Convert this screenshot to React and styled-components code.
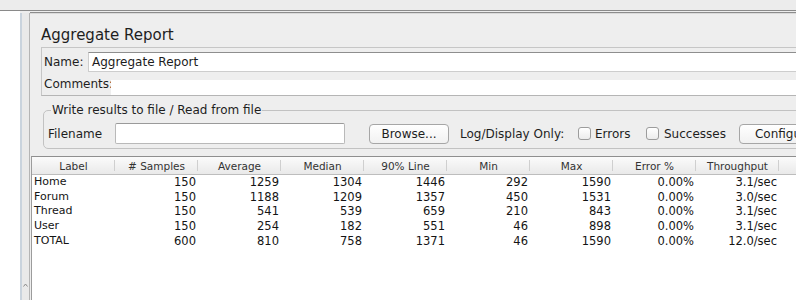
import styled, { createGlobalStyle } from 'styled-components';

const GlobalStyle = createGlobalStyle`
  html, body {
    margin: 0;
    padding: 0;
    background: #ededed;
  }
  body {
    font-family: "DejaVu Sans", "Liberation Sans", sans-serif;
    color: #1c1c1c;
  }
`;

const rows = [
  ['Home', '150', '1259', '1304', '1446', '292', '1590', '0.00%', '3.1/sec'],
  ['Forum', '150', '1188', '1209', '1357', '450', '1531', '0.00%', '3.0/sec'],
  ['Thread', '150', '541', '539', '659', '210', '843', '0.00%', '3.1/sec'],
  ['User', '150', '254', '182', '551', '46', '898', '0.00%', '3.1/sec'],
  ['TOTAL', '600', '810', '758', '1371', '46', '1590', '0.00%', '12.0/sec'],
];

const columns = ['Label', '# Samples', 'Average', 'Median', '90% Line', 'Min', 'Max', 'Error %', 'Throughput', ''];

const Window = styled.div`
  width: 796px;
  height: 300px;
  overflow: hidden;
  display: flex;
  flex-direction: column;
`;

const TopStrip = styled.div`
  height: 10px;
  flex-shrink: 0;
  background: #ececec;
  border-bottom: 1px solid #8a8a8a;
`;

const Workspace = styled.div`
  flex: 1;
  display: flex;
  min-height: 0;
`;

const Tree = styled.div`
  width: 20px;
  flex-shrink: 0;
  background: #fff;
`;

const Splitter = styled.div`
  width: 7px;
  flex-shrink: 0;
  margin-top: 2px;
  background: #e9e9e9;
  border-left: 2px solid #c9d3dd;
  border-right: 1px solid #b4b4b4;
  display: flex;
  flex-direction: column;
  justify-content: flex-end;
  align-items: center;
  padding-bottom: 13px;
`;

const Main = styled.div`
  flex: 1;
  min-width: 0;
  margin-top: 1px;
  border-top: 1px solid #8c8c8c;
  box-shadow: inset 0 1px 0 #dadada;
  background: #eeeeee;
  overflow: hidden;
  display: flex;
  flex-direction: column;
`;

const Title = styled.h1`
  margin: 13px 0 0 11px;
  font-size: 15px;
  line-height: 18px;
  font-weight: normal;
  color: #1e1e1e;
`;

const NameBox = styled.div`
  margin: 3px -10px 0 11px;
  border: 1px solid #c6c6c6;
  border-bottom-color: #b5b5b5;
`;

const FieldRow = styled.div`
  display: flex;
  align-items: ${(p) => (p.$bottom ? 'flex-end' : 'center')};
  height: ${(p) => p.$height}px;
  padding-top: ${(p) => p.$padTop || 0}px;
  box-sizing: border-box;
`;

const Label = styled.span`
  font-size: 12px;
  line-height: 14px;
  padding-left: ${(p) => p.$pad || 0}px;
  margin-left: ${(p) => p.$ml || 0}px;
  width: ${(p) => (p.$w ? `${p.$w}px` : 'auto')};
  box-sizing: border-box;
  flex-shrink: 0;
  white-space: nowrap;
  align-self: center;
  color: #1e1e1e;
`;

const NameInput = styled.div`
  flex: 1;
  height: 20px;
  box-sizing: border-box;
  background: #fff;
  border: 1px solid #cdcdcd;
  border-top: 1px solid #8e8e8e;
  font-size: 12px;
  line-height: 18px;
  padding-left: 3px;
`;

const CommentField = styled.div`
  flex: 1;
  height: 15px;
  background: #fff;
`;

const Group = styled.fieldset`
  margin: 7px -20px 0 13px;
  padding: 6px 0 4px 3px;
  min-width: 0;
  border: 1px solid #c2c2c2;
  border-radius: 5px;
`;

const Legend = styled.legend`
  font-size: 12px;
  line-height: 14px;
  padding: 0 1px;
  margin-left: 4px;
  color: #1e1e1e;
`;

const ControlRow = styled.div`
  display: flex;
  align-items: center;
  height: 21px;
`;

const TextBox = styled.div`
  width: 230px;
  height: 21px;
  box-sizing: border-box;
  background: #fff;
  border: 1px solid #b9b9b9;
  border-top-color: #9a9a9a;
  border-radius: 2px;
  flex-shrink: 0;
`;

const Button = styled.div`
  width: ${(p) => p.$width}px;
  height: 20px;
  box-sizing: border-box;
  margin-left: ${(p) => p.$ml}px;
  border: 1px solid #a6a6a6;
  border-radius: 4px;
  background: linear-gradient(#ffffff, #f1f1f1);
  font-size: 12px;
  line-height: 18px;
  text-align: center;
  flex-shrink: 0;
  white-space: nowrap;
  color: #1e1e1e;
`;

const Check = styled.span`
  width: 13px;
  height: 13px;
  box-sizing: border-box;
  margin-left: ${(p) => p.$ml}px;
  border: 1px solid #9c9c9c;
  border-radius: 3px;
  background: linear-gradient(#ffffff, #ececec);
  flex-shrink: 0;
`;

const Table = styled.div`
  flex: 1;
  margin: 7px 0 0 1px;
  border-left: 1px solid #9c9c9c;
  border-top: 1px solid #8f8f8f;
  background: #fff;
`;

const Grid = styled.div`
  display: grid;
  grid-template-columns: repeat(10, 83px);
`;

const HeadRow = styled(Grid)`
  height: 17px;
  background: linear-gradient(#fbfbfb, #e9e9e9);
  border-bottom: 1px solid #bdbdbd;
`;

const HeadCell = styled.div`
  position: relative;
  font-size: 10.5px;
  line-height: 14px;
  padding-top: 2px;
  text-align: center;
  color: #333;
  white-space: nowrap;
  &::after {
    content: '';
    position: absolute;
    right: 0;
    top: 3px;
    bottom: 3px;
    border-right: 1px solid #cfcfcf;
  }
`;

const BodyRow = styled(Grid)`
  height: 14.7px;
`;

const Cell = styled.div`
  font-size: ${(p) => (p.$num ? 11.5 : 11)}px;
  line-height: 14.7px;
  text-align: ${(p) => (p.$num ? 'right' : 'left')};
  padding: 0 2px;
  white-space: nowrap;
  color: #141414;
`;

export default function App() {
  return (
    <>
      <GlobalStyle />
      <Window>
        <TopStrip />
        <Workspace>
          <Tree />
          <Splitter>
            <svg width="5" height="4" viewBox="0 0 5 4">
              <path d="M0.5 3.5 L2.5 1 L4.5 3.5" fill="none" stroke="#8a8a8a" strokeWidth="1" />
            </svg>
          </Splitter>
          <Main>
            <Title>Aggregate Report</Title>
            <NameBox>
              <FieldRow $height={24} $padTop={3}>
                <Label $pad={2} $w={46}>Name:</Label>
                <NameInput>Aggregate Report</NameInput>
              </FieldRow>
              <FieldRow $height={23} $bottom>
                <Label $pad={2} $w={69}>Comments:</Label>
                <CommentField />
              </FieldRow>
            </NameBox>
            <Group>
              <Legend>Write results to file / Read from file</Legend>
              <ControlRow>
                <Label $pad={1} $w={68}>Filename</Label>
                <TextBox />
                <Button $width={80} $ml={24}>Browse...</Button>
                <Label $ml={11} $w={103}>Log/Display Only:</Label>
                <Check $ml={15} />
                <Label $ml={4} $w={33}>Errors</Label>
                <Check $ml={18} />
                <Label $ml={5} $w={58}>Successes</Label>
                <Button $width={90} $ml={17}>Configure</Button>
              </ControlRow>
            </Group>
            <Table>
              <HeadRow>
                {columns.map((c, i) => (
                  <HeadCell key={i}>{c}</HeadCell>
                ))}
              </HeadRow>
              {rows.map((r) => (
                <BodyRow key={r[0]}>
                  {r.map((v, i) => (
                    <Cell key={i} $num={i > 0}>{v}</Cell>
                  ))}
                  <Cell />
                </BodyRow>
              ))}
            </Table>
          </Main>
        </Workspace>
      </Window>
    </>
  );
}
